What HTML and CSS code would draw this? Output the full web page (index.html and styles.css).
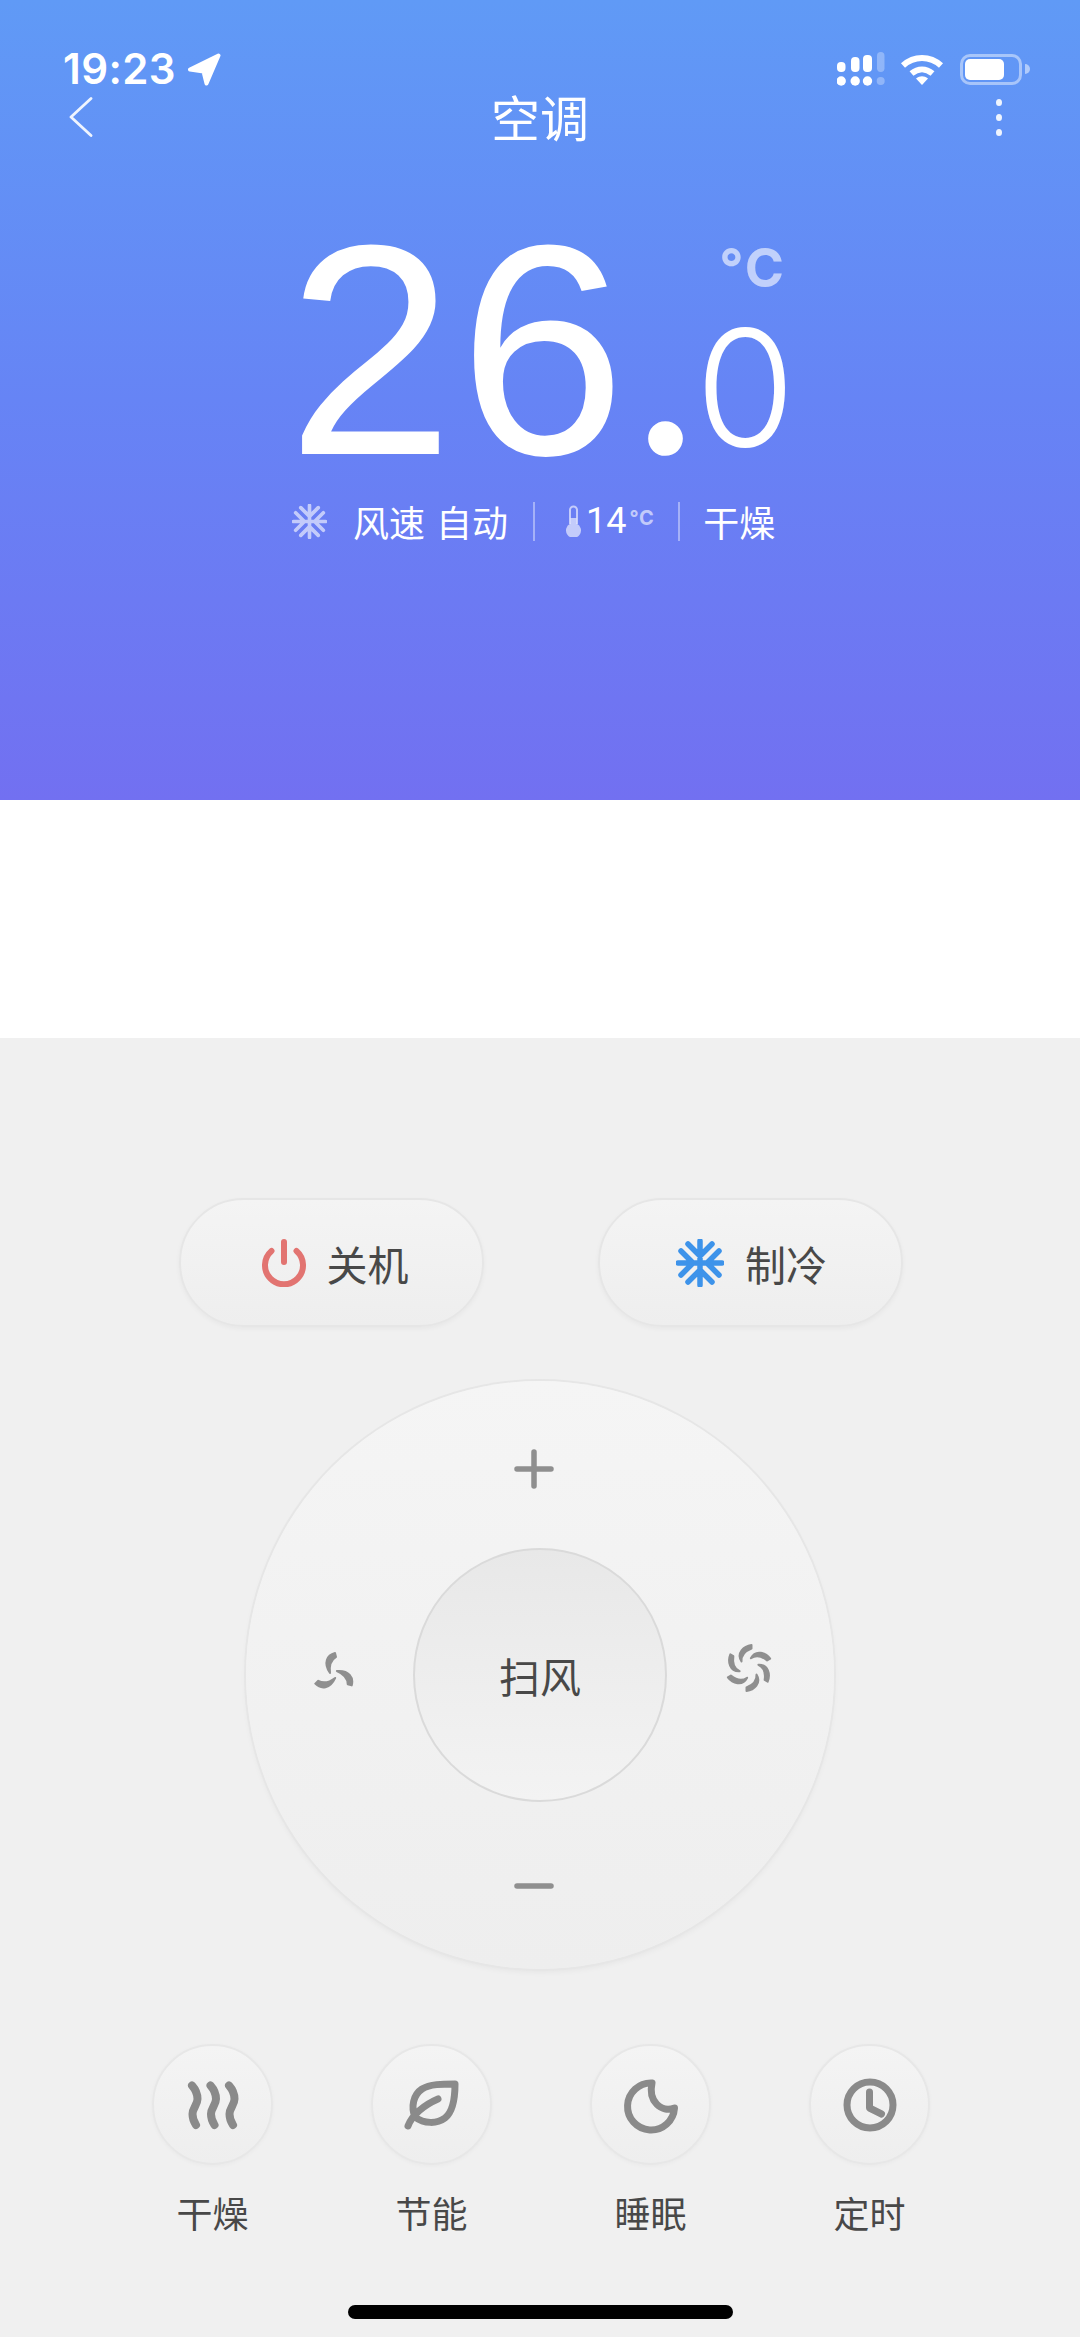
FILE: index.html
```html
<!DOCTYPE html>
<html lang="zh-CN">
<head>
<meta charset="utf-8">
<title>空调</title>
<link rel="stylesheet" href="styles.css">
</head>
<body>
<main class="app">
  <header class="hero">
    <div class="status">
      <div class="status-left">
        <span class="time">19:23</span>
        <svg class="arrow" width="34" height="33" viewBox="0 0 34 33"><path d="M31.500 2.500 3 16.500 16.500 18.500 19.500 30.500Z"/></svg>
      </div>
      <div class="status-right">
        <svg class="signal" width="48" height="34" viewBox="0 0 48 34">
          <rect x="0" y="10" width="8.500" height="10" rx="4"/><rect x="14" y="5" width="8.500" height="15" rx="4"/><rect x="26" y="3" width="9" height="17" rx="4"/><rect class="dim" x="40" y="0" width="7.500" height="20" rx="3.700"/>
          <circle cx="4.200" cy="29" r="4.700"/><circle cx="18.200" cy="29" r="4.700"/><circle cx="30.500" cy="29" r="4.700"/><circle class="dim" cx="43.700" cy="29" r="4"/>
        </svg>
        <svg class="wifi" width="44" height="32" viewBox="0 0 44 32">
          <path class="wave" d="M3 12.500C14 2.500 30 2.500 41 12.500"/><path class="wave" d="M11.500 20.500C18 15 26 15 32.500 20.500"/><path class="wedge" d="M16 25.500C20 22.500 24 22.500 28 25.500L22 32Z"/>
        </svg>
        <div class="battery"><div class="battery-fill"></div></div>
        <div class="battery-nub"></div>
      </div>
    </div>
    <nav class="nav">
      <svg class="back" width="24" height="40" viewBox="0 0 24 40"><path d="M22 1.500 2 20 22 38.500"/></svg>
      <h1 class="title">空调</h1>
      <div class="more"><i></i><i></i><i></i></div>
    </nav>
    <div class="temp">
      <span class="temp-int">26</span>
      <span class="temp-dot">.</span>
      <div class="temp-side">
        <span class="temp-unit">°C</span>
        <span class="temp-frac">0</span>
      </div>
    </div>
    <div class="info">
      <svg class="info-flake" width="35" height="35" viewBox="0 0 48 48"><path d="M24 2V46M2 24H46M12 5 24 17 36 5M12 43 24 31 36 43M5 12 17 24 5 36M43 12 31 24 43 36"/></svg>
      <span class="info-text info-wind">风速 自动</span>
      <span class="divider"></span>
      <svg class="thermo" width="17" height="32" viewBox="0 0 17 32"><path class="thermo-tube" d="M5 19V5a3.500 3.500 0 0 1 7 0V19"/><path class="thermo-bulb" d="M5.500 13h6V18.500a7.500 7.500 0 1 1-6 0Z"/></svg>
      <span class="info-num">14</span><span class="info-unit">°C</span>
      <span class="divider divider-last"></span>
      <span class="info-text">干燥</span>
    </div>
  </header>

  <div class="gap"></div>

  <section class="panel">
    <div class="pills">
      <button class="pill pill-power">
        <svg width="44" height="48" viewBox="0 0 44 48"><path class="power" d="M9.500 12A19 19 0 1 0 34.500 12M22 3V23"/></svg>
        <span>关机</span>
      </button>
      <button class="pill">
        <svg width="48" height="48" viewBox="0 0 48 48"><path class="flake" d="M24 2V46M2 24H46M12 5 24 17 36 5M12 43 24 31 36 43M5 12 17 24 5 36M43 12 31 24 43 36"/></svg>
        <span>制冷</span>
      </button>
    </div>

    <div class="dial">
      <svg class="dial-plus" width="40" height="40" viewBox="0 0 40 40"><path class="sign" d="M3 20H37M20 3V37"/></svg>
      <svg class="dial-low" width="40" height="44" viewBox="0 0 40 44">
        <defs><path id="b3" d="M21 4C13 6 9 14 16 24C15 16 17 11 22 8Z"/></defs>
        <g class="blade"><use href="#b3"/><use href="#b3" transform="rotate(120 20 25)"/><use href="#b3" transform="rotate(240 20 25)"/></g>
      </svg>
      <div class="dial-core">扫风</div>
      <svg class="dial-high" width="50" height="50" viewBox="0 0 50 50">
        <defs><path id="b6" d="M27.500 2C20 3 12 10 17.500 18.500C17 13 21 8 27.500 5.500Z"/></defs>
        <g class="blade"><use href="#b6"/><use href="#b6" transform="rotate(60 25 25)"/><use href="#b6" transform="rotate(120 25 25)"/><use href="#b6" transform="rotate(180 25 25)"/><use href="#b6" transform="rotate(240 25 25)"/><use href="#b6" transform="rotate(300 25 25)"/></g>
      </svg>
      <svg class="dial-minus" width="40" height="10" viewBox="0 0 40 10"><path class="sign" d="M3 5H37"/></svg>
    </div>

    <div class="modes">
      <div class="mode">
        <div class="mode-btn"><svg width="60" height="60" viewBox="0 0 60 60"><path class="glyph glyph-wave" d="M9 10.500C13 15 14.500 19 14.500 24C14.500 30 9.500 33 9.500 39C9.500 44 11 47 13 50M27.500 10.500C31.500 15 33 19 33 24C33 30 28 33 28 39C28 44 29.500 47 31.500 50M46 10.500C50 15 51.500 19 51.500 24C51.500 30 46.500 33 46.500 39C46.500 44 48 47 50 50"/></svg></div>
        <span class="mode-label">干燥</span>
      </div>
      <div class="mode">
        <div class="mode-btn"><svg width="60" height="60" viewBox="0 0 60 60"><path class="glyph" d="M53 9C40 9 28 9 20 14C11 20 9 32 13 42C22 49 35 49 43 43C52 36 53 20 53 9ZM6 51C10 40 22 30 36 24"/></svg></div>
        <span class="mode-label">节能</span>
      </div>
      <div class="mode">
        <div class="mode-btn"><svg width="60" height="60" viewBox="0 0 60 60"><path class="glyph" d="M31 8A23.500 23.500 0 1 0 53.500 33C40 38 27 26 31 8Z"/></svg></div>
        <span class="mode-label">睡眠</span>
      </div>
      <div class="mode">
        <div class="mode-btn"><svg width="60" height="60" viewBox="0 0 60 60"><circle class="glyph" cx="30" cy="30" r="23"/><path class="glyph" d="M29.500 17V33L41.500 39"/></svg></div>
        <span class="mode-label">定时</span>
      </div>
    </div>

    <div class="home-bar"></div>
  </section>
</main>
</body>
</html>
```

FILE: styles.css
```css
* { box-sizing: border-box; }

html, body {
  margin: 0;
  padding: 0;
  background: #fff;
}

body {
  font-family: "Noto Sans CJK SC", "Noto Sans", sans-serif;
  font-weight: 400;
}

.app {
  width: 1080px;
  height: 2337px;
  overflow: hidden;
}

/* Hero */
.hero {
  height: 800px;
  padding-top: 52px;
  background: linear-gradient(180deg, #609af6 0%, #6684f5 50%, #7270f1 100%);
  color: #fff;
}

.status {
  display: flex;
  justify-content: space-between;
  align-items: center;
  height: 34px;
  padding: 0 50px 0 63px;
}

.status-left,
.status-right {
  display: flex;
  align-items: center;
}

.time {
  font-family: Inter, "Liberation Sans", sans-serif;
  font-size: 42px;
  font-weight: 600;
  line-height: 34px;
  letter-spacing: 0.4px;
}

.arrow {
  margin-left: 11px;
}

.arrow path {
  fill: #fff;
  stroke: #fff;
  stroke-width: 4;
  stroke-linejoin: round;
}

.signal {
  fill: #fff;
  margin-right: 15px;
}

.signal .dim {
  opacity: 0.3;
}

.wifi {
  margin-right: 16px;
}

.wifi .wave {
  fill: none;
  stroke: #fff;
  stroke-width: 6;
  stroke-linecap: butt;
}

.wifi .wedge {
  fill: #fff;
}

.battery {
  width: 62px;
  height: 31px;
  padding: 2px;
  border: 3px solid rgba(255, 255, 255, 0.45);
  border-radius: 10px;
}

.battery-fill {
  width: 39px;
  height: 100%;
  background: #fff;
  border-radius: 5px;
}

.battery-nub {
  width: 5px;
  height: 10px;
  margin-left: 3px;
  background: rgba(255, 255, 255, 0.5);
  border-radius: 0 5px 5px 0;
}

.nav {
  display: grid;
  grid-template-columns: 1fr auto 1fr;
  align-items: start;
  margin-top: 11px;
  padding: 0 69px;
}

.back {
  display: block;
}

.back path {
  fill: none;
  stroke: rgba(255, 255, 255, 0.9);
  stroke-width: 2.800;
  stroke-linecap: round;
  stroke-linejoin: round;
}

.title {
  margin: 0;
  font-size: 49px;
  font-weight: 400;
  line-height: 38px;
}

.more {
  display: flex;
  flex-direction: column;
  align-items: flex-end;
  gap: 8px;
  padding: 2px 9px 0 0;
}

.more i {
  display: block;
  width: 6px;
  height: 7px;
  background: rgba(255, 255, 255, 0.9);
  border-radius: 50%;
}

.temp {
  display: flex;
  align-items: flex-start;
  height: 301px;
  margin-top: 63px;
  padding-left: 287px;
}

.temp-int {
  font-family: "Liberation Sans", Arial, sans-serif;
  font-size: 300px;
  line-height: 300px;
  letter-spacing: 5px;
}

.temp-dot {
  margin: 58px -14px 0 -9px;
  font-family: Lato, sans-serif;
  font-size: 375px;
  font-weight: 300;
  line-height: 100px;
}

.temp-side {
  display: flex;
  flex-direction: column;
  align-items: flex-start;
  margin-top: 43px;
  font-family: Inter, "Liberation Sans", sans-serif;
}

.temp-unit {
  margin-left: 24px;
  font-size: 53px;
  font-weight: 700;
  line-height: 50px;
  letter-spacing: 2px;
  color: rgba(255, 255, 255, 0.6);
}

.temp-frac {
  margin-top: 16px;
  font-size: 162px;
  font-weight: 300;
  line-height: 156px;
}

.info {
  display: flex;
  align-items: center;
  height: 40px;
  padding-left: 292px;
}

.info-flake path {
  fill: none;
  stroke: rgba(255, 255, 255, 0.6);
  stroke-width: 5;
  stroke-linecap: round;
  stroke-linejoin: round;
}

.info-text {
  font-size: 36px;
  line-height: 40px;
  white-space: nowrap;
}

.info-wind {
  margin-left: 26px;
  word-spacing: 3px;
}

.divider {
  width: 2px;
  height: 39px;
  margin: 0 30px 0 25px;
  background: rgba(255, 255, 255, 0.4);
}

.divider-last {
  margin: 0 23px 0 24px;
}

.thermo-tube {
  fill: none;
  stroke: rgba(255, 255, 255, 0.6);
  stroke-width: 2;
}

.thermo-bulb {
  fill: rgba(255, 255, 255, 0.6);
}

.info-num {
  margin-left: 4px;
  font-family: Roboto, sans-serif;
  font-size: 36px;
  line-height: 40px;
}

.info-unit {
  align-self: flex-start;
  margin-left: 3px;
  font-family: Inter, sans-serif;
  font-size: 20px;
  font-weight: 700;
  line-height: 34px;
  letter-spacing: 0.5px;
  color: rgba(255, 255, 255, 0.6);
}

.gap {
  height: 238px;
  background: #fff;
}

/* Panel */
.panel {
  height: 1299px;
  padding-top: 160px;
  background: #f0f0f0;
  color: #484848;
}

.pills {
  display: flex;
  gap: 114px;
  padding-left: 179px;
}

.pill {
  display: flex;
  justify-content: center;
  align-items: center;
  gap: 21px;
  width: 305px;
  height: 129px;
  padding: 0 0 0 2px;
  border: 2px solid #e6e6e6;
  border-radius: 65px;
  background: linear-gradient(180deg, #f4f4f4, #eeeeee);
  box-shadow: 0 2px 5px rgba(0, 0, 0, 0.04);
  font: inherit;
  font-size: 41px;
  line-height: 48px;
  color: inherit;
}

.pill-power {
  padding-left: 7px;
}

.power {
  fill: none;
  stroke: #e27471;
  stroke-width: 6;
  stroke-linecap: round;
}

.flake {
  fill: none;
  stroke: #3d93ea;
  stroke-width: 5.500;
  stroke-linecap: round;
  stroke-linejoin: round;
}

.dial {
  display: grid;
  grid-template-columns: 167px 254px 167px;
  grid-template-rows: 167px 254px 167px;
  width: 588px;
  height: 588px;
  margin: 54px auto 0;
  border-radius: 50%;
  background: linear-gradient(180deg, #f5f5f5, #eeeeee);
  box-shadow: 0 0 0 2px #e6e6e6, 0 3px 6px rgba(0, 0, 0, 0.05);
}

.dial-plus {
  grid-column: 2;
  grid-row: 1;
  place-self: center;
  margin: 9px 13px 0 0;
}

.dial-low {
  grid-column: 1;
  grid-row: 2;
  align-self: center;
  justify-self: start;
  margin: 0 0 8px 68px;
}

.dial-core {
  display: flex;
  justify-content: center;
  align-items: center;
  grid-column: 2;
  grid-row: 2;
  border: 2px solid #dadada;
  border-radius: 50%;
  background: linear-gradient(180deg, #e8e8e8, #f3f3f3);
  font-size: 41px;
}

.dial-high {
  grid-column: 3;
  grid-row: 2;
  align-self: center;
  justify-self: start;
  margin: 0 0 14px 57px;
}

.dial-minus {
  grid-column: 2;
  grid-row: 3;
  place-self: center;
  margin: 0 13px 0 0;
}

.sign {
  fill: none;
  stroke: #8f8f8f;
  stroke-width: 5.500;
  stroke-linecap: round;
}

.blade {
  fill: #8f8f8f;
  stroke: #8f8f8f;
  stroke-width: 2;
  stroke-linejoin: round;
}

.modes {
  display: flex;
  gap: 98px;
  margin-top: 75px;
  padding-left: 152px;
}

.mode {
  display: flex;
  flex-direction: column;
  align-items: center;
  width: 121px;
}

.mode-btn {
  display: flex;
  justify-content: center;
  align-items: center;
  width: 121px;
  height: 121px;
  border: 2px solid #e7e7e7;
  border-radius: 50%;
  background: linear-gradient(180deg, #f4f4f4, #eeeeee);
  box-shadow: 0 1px 4px rgba(0, 0, 0, 0.03);
}

.glyph {
  fill: none;
  stroke: #8a8a8a;
  stroke-width: 7;
  stroke-linecap: round;
  stroke-linejoin: round;
}

.glyph-wave {
  stroke-width: 8;
}

.mode-label {
  margin-top: 27px;
  font-size: 36px;
  line-height: 40px;
  white-space: nowrap;
}

.home-bar {
  width: 385px;
  height: 14px;
  margin: 73px auto 0;
  background: #000;
  border-radius: 7px;
}
```
